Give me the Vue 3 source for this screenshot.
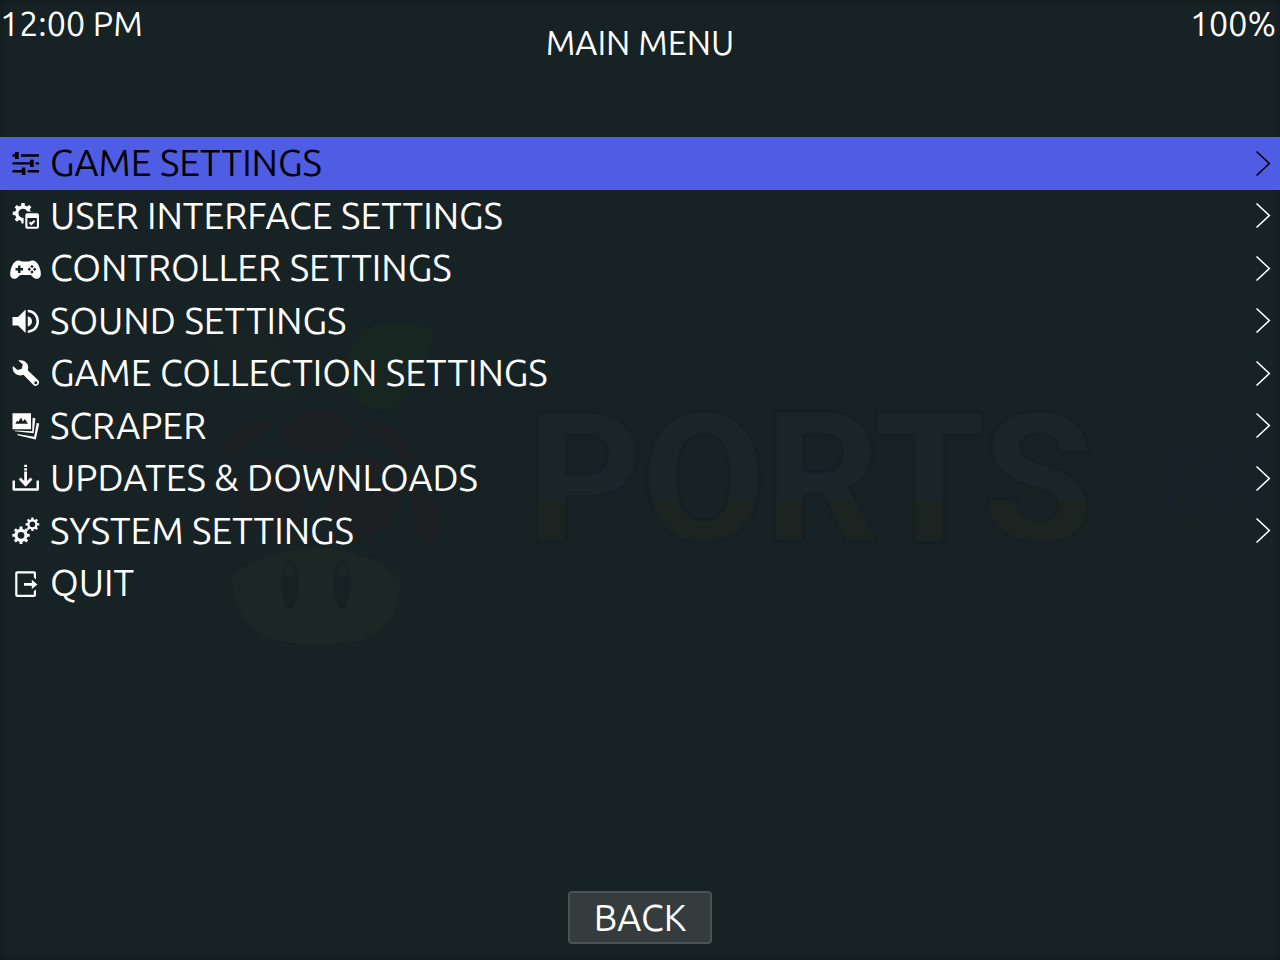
<script setup>
import { ref } from 'vue'

// Outline of a cog wheel with a round hole, as one even-odd path.
function cog(cx, cy, outer, root, teeth, hole) {
  const step = (Math.PI * 2) / teeth
  const points = []
  for (let i = 0; i < teeth; i++) {
    const a = i * step - Math.PI / 2
    const corners = [
      [root, a - step * 0.3],
      [outer, a - step * 0.2],
      [outer, a + step * 0.2],
      [root, a + step * 0.3],
    ]
    for (const [r, t] of corners) {
      points.push(`${(cx + r * Math.cos(t)).toFixed(2)} ${(cy + r * Math.sin(t)).toFixed(2)}`)
    }
  }
  return `M${points.join('L')}Z M${cx - hole} ${cy}a${hole} ${hole} 0 1 0 ${hole * 2} 0a${hole} ${hole} 0 1 0 ${-hole * 2} 0Z`
}

const items = [
  {
    label: 'GAME SETTINGS',
    more: true,
    icon: 'M2.5 7.3H5V5h3.7v7H5V9.7H2.5ZM11 7.3h18v2.4H11ZM2.5 15.2H20v-2.4h3.7v7.2H20v-2.4H2.5ZM25.6 15.2H29v2.4h-3.4ZM2.5 23h9.3v-2.5h3.6V28h-3.6v-2.6H2.5ZM17.7 23H29v2.4H17.7Z',
  },
  {
    label: 'USER INTERFACE SETTINGS',
    more: true,
    icon: cog(13, 13.3, 10.4, 7.9, 8, 4.6),
    badge: true,
  },
  {
    label: 'CONTROLLER SETTINGS',
    more: true,
    icon: 'M7.5 8.6C9 8.2 10.6 8.6 11.8 9.5H19.2C20.4 8.6 22 8.2 23.5 8.6C27 9.4 29.2 13.5 30.3 18C31.3 22 31 25.6 28.3 26.6C26 27.4 24 26.3 22.4 24.4C21.6 23.4 20.8 22.9 19.6 22.9H11.4C10.2 22.9 9.4 23.4 8.6 24.4C7 26.3 5 27.4 2.7 26.6C0 25.6 -.3 22 .7 18C1.8 13.5 4 9.4 7.5 8.6ZM8 13.5V16H5.5V18.5H8V21H10.5V18.5H13V16H10.5V13.5ZM22 12.9l-1.7 1.7L22 16.3l1.7-1.7ZM22 18.3L20.3 20l1.7 1.7 1.7-1.7ZM19.3 15.6l-1.7 1.7 1.7 1.7 1.7-1.7ZM24.7 15.6L23 17.3l1.7 1.7 1.7-1.7Z',
  },
  {
    label: 'SOUND SETTINGS',
    more: true,
    icon: 'M2.5 12H8L15.6 4.6V28L8 20.5H2.5ZM17.8 11.2C20.5 11.8 22 13.7 22 16.3S20.5 20.8 17.8 21.4ZM17.8 4.7C24.6 4.9 29 9.9 29 16.3S24.6 27.7 17.8 27.9V25.4C23 25.1 26.4 21.2 26.4 16.3S23 7.5 17.8 7.2Z',
  },
  {
    label: 'GAME COLLECTION SETTINGS',
    more: true,
    icon: 'M8.3 3.6C12.9 2.2 18 5.2 18.2 10.2C18.2 11.4 18 12.4 17.7 13.3L28.2 23.2C29.3 24.4 29.3 26.6 28.1 27.8C26.9 29.2 24.8 29.4 23.4 28.1L13.5 17.7C9.3 19.6 4.3 17.5 3 13.1C2.6 11.6 2.6 10.2 2.9 9.1L7.5 13L11.8 11.7L12.8 7.5ZM25.8 24.2A1.5 1.5 0 1 0 25.8 27.2A1.5 1.5 0 1 0 25.8 24.2Z',
  },
  {
    label: 'SCRAPER',
    more: true,
    icon: 'M2.5 3.2H21V19.3H2.5ZM5.4 13.7H18L14.9 9L12.8 11.5L11.2 7.6L8 12L7.1 10.5ZM22.6 7.8L25.4 8.3L23.6 23.3L4.9 21.2L4.7 20.5L22.2 21.3ZM26.7 13L29.2 13.5L25.8 29.4L7.6 25.2L7.4 24L24.2 26.8Z',
  },
  {
    label: 'UPDATES & DOWNLOADS',
    more: true,
    icon: 'M14.2 2.8h2.8v2.3h-2.8ZM14.2 6.2h2.8v2.3h-2.8ZM14.2 9.6H17V19L20.5 15.6L22.4 17.5L15.6 24.7L8.8 17.5L10.7 15.6L14.2 19ZM2.5 18.5H5V26.3H26.5V18.5H29V27C29 28.1 28.4 28.8 27.3 28.8H4.2C3.1 28.8 2.5 28.1 2.5 27Z',
  },
  {
    label: 'SYSTEM SETTINGS',
    more: true,
    icon: `${cog(11, 20.3, 8.8, 6.6, 8, 3.4)} ${cog(22.4, 9.3, 6.9, 5.1, 8, 2.9)}`,
  },
  {
    label: 'QUIT',
    more: false,
    icon: 'M7.2 3.2H24C25.3 3.2 26 4 26 5.2V11.4L23.8 9.5V5.5H7.4V26.7H23.8V23.3L26 21.4V27C26 28.2 25.3 29 24 29H7.2C6 29 5.2 28.2 5.2 27V5.2C5.2 4 6 3.2 7.2 3.2ZM14 15H21.8V11.8L27.4 16.4L21.8 21V17.8H14Z',
  },
]

const selected = ref(0)
</script>

<template>
  <div class="screen">
    <svg class="backdrop" viewBox="0 0 1280 960" preserveAspectRatio="xMidYMid slice" aria-hidden="true">
      <defs>
        <linearGradient id="wordmark" x1="0" y1="0" x2="0" y2="1">
          <stop offset="0.6" stop-color="#192528" />
          <stop offset="0.6" stop-color="#1c2422" />
        </linearGradient>
      </defs>
      <g fill="#182622">
        <path d="M344 372Q350 335 374 325L410 323L435 330Q430 350 425 362Q410 402 382 410Q345 405 344 372Z" />
        <path d="M208 332Q260 318 290 355Q300 385 292 402Q240 412 222 375Z" opacity=".5" />
      </g>
      <g fill="#1c2023">
        <ellipse cx="318" cy="432" rx="35" ry="21" />
        <ellipse cx="272" cy="496" rx="35" ry="38" />
        <ellipse cx="363" cy="496" rx="36" ry="40" />
        <path d="M219 460Q222 424 272 420Q270 436 219 460Z" />
        <path d="M359 421Q410 420 414 465Q385 450 359 421Z" />
        <path d="M411 495Q438 487 441 523Q437 548 425 547Q412 540 411 495Z" />
      </g>
      <path fill="#1c2625" d="M232 577Q260 550 318 548Q374 550 400 580Q402 625 360 641Q318 648 276 641Q232 625 232 577Z" />
      <g fill="#162123">
        <ellipse cx="290" cy="584" rx="8" ry="25" />
        <ellipse cx="342" cy="584" rx="8" ry="25" />
      </g>
      <g fill="#1a2527">
        <ellipse cx="290" cy="570" rx="5" ry="8" />
        <ellipse cx="342" cy="570" rx="5" ry="8" />
      </g>
      <text class="wordmark" x="810" y="540" text-anchor="middle">PORTS</text>
      <text class="next" x="1160" y="514">SN</text>
    </svg>

    <header class="top">
      <time class="clock">12:00 PM</time>
      <h1 class="title">MAIN MENU</h1>
      <span class="battery">100%</span>
    </header>

    <nav class="menu" aria-label="Main menu">
      <ul class="list">
        <li v-for="(item, i) in items" :key="item.label">
          <button type="button" class="row" :class="{ active: i === selected }" @click="selected = i">
            <svg class="icon" viewBox="0 0 32 32" aria-hidden="true">
              <path v-if="!item.badge" :d="item.icon" fill-rule="evenodd" />
              <template v-else>
                <mask id="cog-cut">
                  <rect width="32" height="32" fill="#fff" />
                  <rect x="13.6" y="11.6" width="18" height="20" rx="2" fill="#000" />
                </mask>
                <path :d="item.icon" fill-rule="evenodd" mask="url(#cog-cut)" />
                <path fill-rule="evenodd" d="M17.3 13.2H27Q29 13.2 29 15.2V26.8Q29 28.8 27 28.8H17.3Q15.3 28.8 15.3 26.8V15.2Q15.3 13.2 17.3 13.2ZM17.4 18V26.7H26.9V18Z" />
                <path class="tick" d="M19.6 22.4L21.3 24L24.6 20.7" />
              </template>
            </svg>
            <span class="label">{{ item.label }}</span>
            <svg v-if="item.more" class="chevron" viewBox="0 0 16 27" aria-hidden="true">
              <path d="M1.5 1.5L14.3 13.5L1.5 25.5" />
            </svg>
          </button>
        </li>
      </ul>
    </nav>

    <footer class="bottom">
      <button type="button" class="back">BACK</button>
    </footer>
  </div>
</template>

<style>
body {
  margin: 0;
  background: #172224;
}
</style>

<style scoped>
.screen {
  position: relative;
  display: flex;
  flex-direction: column;
  min-height: 100vh;
  overflow: hidden;
  background: #172224;
  box-shadow: inset 0 0 6px #111a1c;
  color: #fff;
  font-family: Ubuntu, "Noto Sans", sans-serif;
}

.backdrop {
  position: absolute;
  inset: 0;
  width: 100%;
  height: 100%;
}

.wordmark {
  fill: url(#wordmark);
  stroke: #152022;
  stroke-width: 6px;
  paint-order: stroke;
  font: bold 178px Roboto, sans-serif;
}

.next {
  fill: #172127;
  font: bold 84px Roboto, sans-serif;
}

.top,
.menu,
.bottom {
  position: relative;
}

.top {
  display: grid;
  grid-template-columns: 1fr auto 1fr;
  padding-bottom: 72px;
  font-size: 34px;
  line-height: 46px;
}

.title {
  margin: 19px 0 0;
  font: inherit;
}

.battery {
  padding-right: 4px;
  text-align: right;
}

.list {
  margin: 0;
  padding: 0;
  list-style: none;
}

.row {
  display: flex;
  align-items: center;
  gap: 8px;
  width: 100%;
  margin: 0;
  padding: 0 9px 0 10px;
  border: 0;
  background: none;
  color: inherit;
  font: inherit;
  font-size: 37px;
  line-height: 1.42;
  text-align: left;
  cursor: pointer;
}

.row.active {
  background: #4f5de4;
  color: #000;
}

.icon {
  flex: none;
  width: 32px;
  height: 32px;
  fill: currentColor;
}

.tick {
  fill: none;
  stroke: currentColor;
  stroke-width: 2.2;
}

.label {
  flex: 1;
}

.chevron {
  flex: none;
  width: 16px;
  height: 27px;
  fill: none;
  stroke: currentColor;
  stroke-width: 1.6;
}

.bottom {
  display: flex;
  justify-content: center;
  margin-top: auto;
  padding: 24px 0 16px;
}

.back {
  padding: 0 24px;
  border: 2px solid #4a5354;
  border-radius: 4px;
  background: #343c3e;
  color: inherit;
  font: inherit;
  font-size: 37px;
  line-height: 49px;
  cursor: pointer;
}
</style>
